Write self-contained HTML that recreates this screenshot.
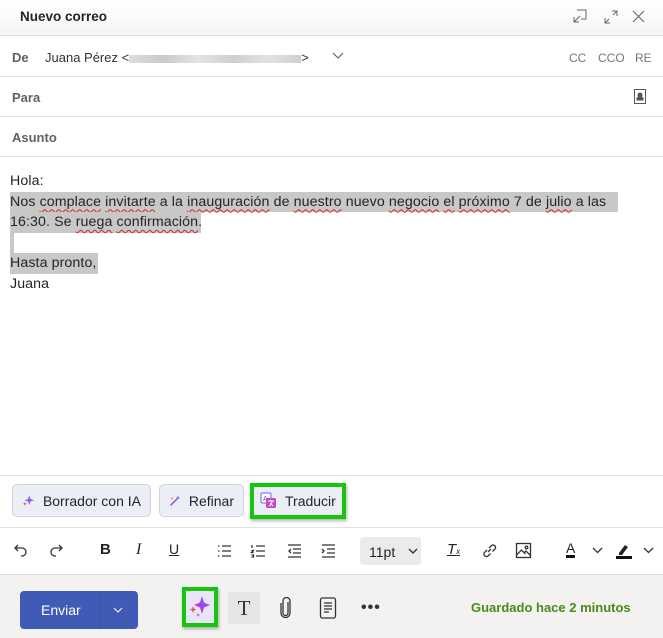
<!DOCTYPE html>
<html><head><meta charset="utf-8"><style>
*{box-sizing:border-box;margin:0;padding:0}
body{width:663px;height:638px;background:#fff;font-family:"Liberation Sans",sans-serif;color:#242424;position:relative;overflow:hidden}
.abs{position:absolute;white-space:nowrap}
.hdr{left:0;top:0;width:663px;height:36px;background:linear-gradient(#fff,#f5f5f5);border-bottom:1px solid #dcdcdc}
.line{left:0;width:663px;height:1px;background:#e1e1e1}
.lbl{font-size:13px;font-weight:bold;color:#616161}
.body{left:10px;top:171px;font-size:14.2px;line-height:20.5px;color:#242424;letter-spacing:0.1px}
.hl{background:#c8c8c8}
.sq{text-decoration:underline wavy #e02020;text-decoration-thickness:1px;text-underline-offset:3px}
.btn{height:33px;border:1px solid #cfd3dc;background:#eceef6;border-radius:5px;font-size:14px;display:flex;align-items:center;gap:8px;padding:0 9px}
.tb{top:541px;font-size:15px;color:#242424}
</style></head><body>
<div class="abs hdr"></div>
<div class="abs" style="left:20px;top:9px;font-size:13.5px;font-weight:bold">Nuevo correo</div>
<svg class="abs" style="left:572px;top:8px" width="16" height="16" viewBox="0 0 16 16" fill="none" stroke="#666" stroke-width="1"><path d="M5 2h9v9H9M2 14l6-6M2 9v5h5"/></svg>
<svg class="abs" style="left:603px;top:9px" width="16" height="16" viewBox="0 0 16 16" fill="none" stroke="#666" stroke-width="1"><path d="M9 2h5v5M14 2l-4 4M2 9v5h5M2 14l4-4"/></svg>
<svg class="abs" style="left:632px;top:10px" width="13" height="13" viewBox="0 0 13 13" stroke="#666" stroke-width="1.1"><path d="M1 1l11 11M12 1L1 12"/></svg>

<div class="abs lbl" style="left:12px;top:50px">De</div>
<div class="abs" style="left:45px;top:50px;font-size:13px;color:#333">Juana Pérez &lt;<span style="display:inline-block;width:172px;height:8px;background:linear-gradient(90deg,#ddd,#c9c9c9 20%,#e4e4e4 40%,#cfcfcf 60%,#e2e2e2 80%,#d0d0d0);vertical-align:middle"></span>&gt;</div>
<svg class="abs" style="left:332px;top:52px" width="12" height="8" viewBox="0 0 12 8" fill="none" stroke="#555"><path d="M1 1l5 5 5-5"/></svg>
<div class="abs" style="left:569px;top:51px;font-size:12px;color:#777">CC</div>
<div class="abs" style="left:598px;top:51px;font-size:12px;color:#777">CCO</div>
<div class="abs" style="left:635px;top:51px;font-size:12px;color:#777">RE</div>
<div class="abs line" style="top:76px"></div>
<div class="abs lbl" style="left:12px;top:90px">Para</div>
<svg class="abs" style="left:633px;top:89px" width="13" height="15" viewBox="0 0 13 15" fill="none" stroke="#555"><rect x="1.5" y="0.5" width="11" height="14"/><circle cx="7" cy="6" r="2" fill="#555"/><path d="M4 11h6v-1.5c0-1-1-1.5-3-1.5s-3 .5-3 1.5z" fill="#555"/></svg>
<div class="abs line" style="top:116px"></div>
<div class="abs lbl" style="left:12px;top:130px">Asunto</div>
<div class="abs line" style="top:156px"></div>

<div class="abs body">Hola:<br>
<span class="hl" style="display:inline-block;width:608px">Nos <span class="sq">complace</span> <span class="sq">invitarte</span> a la <span class="sq">inauguración</span> de <span class="sq">nuestro</span> nuevo <span class="sq">negocio</span> <span class="sq">el</span> <span class="sq">próximo</span> 7 de <span class="sq">julio</span> a las</span><br>
<span class="hl" style="display:inline-block;width:191px">16:30. Se <span class="sq">ruega</span> <span class="sq">confirmación</span>.</span><br>
<span class="hl" style="display:inline-block;width:4px;height:20px;vertical-align:top"></span><br>
<span class="hl" style="display:inline-block;width:88px">Hasta pronto,</span><br>Juana</div>

<div class="abs line" style="top:475px"></div>
<div class="abs btn" style="left:12px;top:484px;width:139px"><svg width="16" height="16" viewBox="0 0 16 16"><path d="M9 1l1.5 4.5L15 7l-4.5 1.5L9 13l-1.5-4.5L3 7l4.5-1.5z" fill="#8a5cf0"/><path d="M3.5 9l.7 1.8 1.8.7-1.8.7-.7 1.8-.7-1.8L1 11.5l1.8-.7z" fill="#e0508a"/></svg>Borrador con IA</div>
<div class="abs btn" style="left:159px;top:484px;width:85px"><svg width="16" height="16" viewBox="0 0 16 16"><path d="M2 14l9-9" stroke="#a050e0" stroke-width="2"/><path d="M12 1l.8 2 2 .8-2 .8-.8 2-.8-2-2-.8 2-.8z" fill="#7a5cf0"/><path d="M4 3l.5 1.2 1.2.5-1.2.5L4 6.4l-.5-1.2-1.2-.5 1.2-.5z" fill="#e0508a"/></svg>Refinar</div>
<div class="abs" style="left:250px;top:483px;width:96px;height:36px;border:4px solid #16c60c;background:#eceef6;box-shadow:1px 2px 3px rgba(0,0,0,.3)"></div>
<div class="abs" style="left:260px;top:492px;display:flex;align-items:center;gap:8px;font-size:14px"><svg width="17" height="17" viewBox="0 0 17 17"><rect x="1" y="1" width="10" height="10" rx="1.5" fill="#fff" stroke="#7a5cf0"/><text x="3" y="9" font-size="7" fill="#5a4ad0" font-family="Liberation Sans">A</text><rect x="6" y="6" width="10" height="10" rx="1.5" fill="#c04ac8"/><path d="M8 9h6M11 8v1M9 14c2-1 3-3 3-5M10 11l3 3" stroke="#fff" stroke-width="1" fill="none"/></svg>Traducir</div>
<div class="abs line" style="top:527px"></div>

<svg class="abs" style="left:13px;top:543px" width="16" height="16" viewBox="0 0 16 16" fill="none" stroke="#333" stroke-width="1.3"><path d="M5 2L2 5l3 3M2 5h7a4 4 0 010 8H8"/></svg>
<svg class="abs" style="left:48px;top:543px" width="16" height="16" viewBox="0 0 16 16" fill="none" stroke="#333" stroke-width="1.3"><path d="M11 2l3 3-3 3M14 5H7a4 4 0 000 8h1"/></svg>
<div class="abs tb" style="left:100px;font-weight:bold">B</div>
<div class="abs tb" style="left:136px;font-style:italic;font-family:'Liberation Serif',serif;font-size:16px">I</div>
<div class="abs tb" style="left:169px;text-decoration:underline;font-size:14px">U</div>
<svg class="abs" style="left:216px;top:543px" width="16" height="16" viewBox="0 0 16 16" stroke="#333" stroke-width="1.3"><path d="M6 3h9M6 8h9M6 13h9M2 3h1.5M2 8h1.5M2 13h1.5"/></svg>
<svg class="abs" style="left:250px;top:543px" width="16" height="16" viewBox="0 0 16 16" stroke="#333" stroke-width="1.3" fill="none"><path d="M6 3h9M6 8h9M6 13h9M2 2v3M1.5 7.5h2l-2 2h2M1.5 12h2v2h-2"/></svg>
<svg class="abs" style="left:286px;top:543px" width="16" height="16" viewBox="0 0 16 16" stroke="#333" stroke-width="1.3" fill="none"><path d="M2 2h13M7 6h8M7 10h8M2 14h13M5 6L3 8l2 2"/></svg>
<svg class="abs" style="left:320px;top:543px" width="16" height="16" viewBox="0 0 16 16" stroke="#333" stroke-width="1.3" fill="none"><path d="M2 2h13M7 6h8M7 10h8M2 14h13M2 6l2 2-2 2"/></svg>
<div class="abs" style="left:360px;top:537px;width:61px;height:28px;background:#ebebeb;border-radius:3px;font-size:14px;padding:7px 0 0 9px">11pt<svg style="position:absolute;left:48px;top:11px" width="10" height="7" viewBox="0 0 10 7" fill="none" stroke="#333" stroke-width="1.4"><path d="M1 1l4 4 4-4"/></svg></div>
<div class="abs tb" style="left:447px;font-style:italic;text-decoration:underline;font-size:15px">T<span style="font-size:8px">x</span></div>
<svg class="abs" style="left:481px;top:542px" width="17" height="17" viewBox="0 0 17 17" fill="none" stroke="#333" stroke-width="1.3"><path d="M7 10l3-3M6 8L3.5 10.5a2.5 2.5 0 003.5 3.5L9.5 11.5M8 6l2.5-2.5a2.5 2.5 0 013.5 3.5L11.5 9.5"/></svg>
<svg class="abs" style="left:515px;top:542px" width="17" height="17" viewBox="0 0 17 17" fill="none" stroke="#333" stroke-width="1.3"><rect x="1.5" y="1.5" width="14" height="14"/><path d="M1.5 13l5-5 4 4M9 11l2-2 4.5 4.5"/><circle cx="11.5" cy="5.5" r="1.3"/></svg>
<div class="abs tb" style="left:566px;font-size:14px;border-bottom:3px solid #111;line-height:14px">A</div>
<svg class="abs" style="left:592px;top:547px" width="11" height="7" viewBox="0 0 11 7" fill="none" stroke="#333" stroke-width="1.3"><path d="M1 1l4.5 4.5L10 1"/></svg>
<svg class="abs" style="left:615px;top:541px" width="18" height="18" viewBox="0 0 18 18"><path d="M4 12l6-8 3 2-6 8H4z" fill="#222"/><rect x="1" y="15" width="16" height="3" fill="#111"/></svg>
<svg class="abs" style="left:643px;top:547px" width="11" height="7" viewBox="0 0 11 7" fill="none" stroke="#333" stroke-width="1.3"><path d="M1 1l4.5 4.5L10 1"/></svg>

<div class="abs" style="left:0;top:574px;width:663px;height:64px;background:#f3f2f1;border-top:1px solid #dcdcdc"></div>
<div class="abs" style="left:20px;top:591px;width:118px;height:38px;background:#3f5bb5;border-radius:4px;color:#fff;font-size:14px"><span style="position:absolute;left:21px;top:11px">Enviar</span><div style="position:absolute;left:79px;top:0;width:1px;height:38px;background:#3a52a0"></div><svg style="position:absolute;left:93px;top:16px" width="10" height="6" viewBox="0 0 10 6" fill="none" stroke="#fff"><path d="M1 1l4 4 4-4"/></svg></div>
<div class="abs" style="left:182px;top:587px;width:36px;height:40px;border:4px solid #16c60c;background:#e8e6f6;box-shadow:1px 2px 3px rgba(0,0,0,.3)"></div>
<svg class="abs" style="left:188px;top:595px" width="24" height="24" viewBox="0 0 24 24"><defs><linearGradient id="g" x1="0" y1="1" x2="1" y2="0"><stop offset="0" stop-color="#e0508a"/><stop offset=".5" stop-color="#a040f0"/><stop offset="1" stop-color="#5080ff"/></linearGradient></defs><path d="M14 1l2 6.5L22 10l-6 2.5L14 19l-2-6.5L6 10l6-2.5z" fill="url(#g)"/><path d="M5 11l1 2.5 2.5 1-2.5 1L5 18l-1-2.5-2.5-1 2.5-1z" fill="#e05a7a"/><path d="M10 18l.6 1.4 1.4.6-1.4.6-.6 1.4-.6-1.4L8 20l1.4-.6z" fill="#e05a9a"/></svg>
<div class="abs" style="left:228px;top:592px;width:32px;height:32px;background:#e6e5e4;border-radius:3px;font-family:'Liberation Serif',serif;font-size:21px;text-align:center;line-height:32px;color:#333">T</div>
<svg class="abs" style="left:279px;top:597px" width="14" height="22" viewBox="0 0 14 22" fill="none" stroke="#333" stroke-width="1.3"><path d="M9 5v11a2.5 2.5 0 01-5 0V4a3.5 3.5 0 017 0v12a4.5 4.5 0 01-9 0V6"/></svg>
<svg class="abs" style="left:319px;top:597px" width="18" height="22" viewBox="0 0 18 22" fill="none" stroke="#333" stroke-width="1.3"><rect x="1.5" y="1" width="15" height="20" rx="2"/><path d="M5 6h8M5 9h8M5 12h8M5 15h5"/></svg>
<div class="abs" style="left:361px;top:599px;font-size:16px;font-weight:bold;letter-spacing:1px;color:#333">•••</div>
<div class="abs" style="left:471px;top:600px;font-size:13px;font-weight:bold;color:#4b8a16">Guardado hace 2 minutos</div>
</body></html>
